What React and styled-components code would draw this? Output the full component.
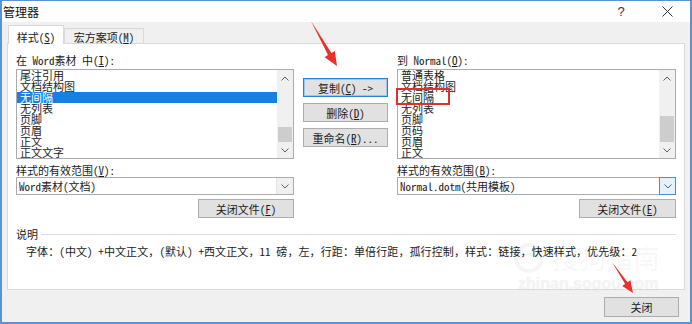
import React from "react";
import styled, { createGlobalStyle } from "styled-components";

const GlobalStyle = createGlobalStyle`
  html, body {
    margin: 0;
    padding: 0;
    background: #ffffff;
  }
  body {
    font-family: "Noto Sans Mono CJK SC", "Noto Sans CJK SC", sans-serif;
    font-size: 11px;
    color: #1a1a1a;
  }
  * {
    box-sizing: border-box;
  }
`;

const leftItems = ["尾注引用", "文档结构图", "无间隔", "无列表", "页脚", "页眉", "正文", "正文文字"];
const rightItems = ["普通表格", "文档结构图", "无间隔", "无列表", "页脚", "页码", "页眉", "正文"];

function Chevron({ up }) {
  return (
    <svg width="8" height="5" viewBox="0 0 8 5">
      <polyline
        points={up ? "0.5,4.5 4,1 7.5,4.5" : "0.5,0.5 4,4 7.5,0.5"}
        fill="none"
        stroke="#606060"
        strokeWidth="1"
      />
    </svg>
  );
}

function ListBox({ items, selected, marked, thumb }) {
  return (
    <List>
      <Items>
        {items.map((item, i) => (
          <Item key={i} $selected={i === selected}>
            {i === marked ? <Marked>{item}</Marked> : item}
          </Item>
        ))}
      </Items>
      <ScrollBar>
        <ScrollArrow>
          <Chevron up />
        </ScrollArrow>
        <Track>
          <Thumb style={{ height: thumb }} />
        </Track>
        <ScrollArrow>
          <Chevron />
        </ScrollArrow>
      </ScrollBar>
    </List>
  );
}

function App() {
  return (
    <>
      <GlobalStyle />
      <Window>
        <TitleBar>
          <TitleText>管理器</TitleText>
          <TitleButtons>
            <TitleButton>?</TitleButton>
            <TitleButton>
              <svg width="11" height="11" viewBox="0 0 11 11">
                <path d="M0.5 0.5 L10.5 10.5 M10.5 0.5 L0.5 10.5" stroke="#333" strokeWidth="1" />
              </svg>
            </TitleButton>
          </TitleButtons>
        </TitleBar>
        <Body>
          <TabRow>
            <Tab $active>
              样式(<u>S</u>)
            </Tab>
            <Tab>
              宏方案项(<u>M</u>)
            </Tab>
          </TabRow>
          <Panel>
            <TopGrid>
              <Column>
                <FieldLabel>
                  在 Word素材 中(<u>I</u>):
                </FieldLabel>
                <ListBox items={leftItems} selected={2} thumb={15} />
                <FieldLabel $gap={4}>
                  样式的有效范围(<u>V</u>):
                </FieldLabel>
                <Combo>
                  <ComboText>Word素材(文档)</ComboText>
                  <ComboArrow>
                    <Chevron />
                  </ComboArrow>
                </Combo>
                <ButtonRow>
                  <Button $width={96}>
                    关闭文件(<u>F</u>)
                  </Button>
                </ButtonRow>
              </Column>
              <Middle>
                <Button $default>
                  复制(<u>C</u>) -&gt;
                </Button>
                <Button>
                  删除(<u>D</u>)
                </Button>
                <Button>
                  重命名(<u>R</u>)...
                </Button>
              </Middle>
              <Column>
                <FieldLabel>
                  到 Normal(<u>O</u>):
                </FieldLabel>
                <ListBox items={rightItems} marked={2} thumb={26} />
                <FieldLabel $gap={4}>
                  样式的有效范围(<u>B</u>):
                </FieldLabel>
                <Combo>
                  <ComboText>Normal.dotm(共用模板)</ComboText>
                  <ComboArrow $hover>
                    <Chevron />
                  </ComboArrow>
                </Combo>
                <ButtonRow>
                  <Button $width={97}>
                    关闭文件(<u>E</u>)
                  </Button>
                </ButtonRow>
              </Column>
            </TopGrid>
            <GroupHeader>说明</GroupHeader>
            <Description>
              字体：(中文) +中文正文，(默认) +西文正文，11 磅，左，行距：单倍行距，孤行控制，样式：链接，快速样式，优先级：2
            </Description>
          </Panel>
          <Footer>
            <Button $width={75} $height={20}>
              关闭
            </Button>
          </Footer>
        </Body>
        <Watermark>
          <WatermarkLogo>
            <svg width="34" height="30" viewBox="0 0 34 30">
              <circle cx="17" cy="15" r="13" fill="none" stroke="currentColor" strokeWidth="4" />
              <path d="M8 15 Q17 7 26 15" fill="none" stroke="currentColor" strokeWidth="3" />
            </svg>
            搜狗指南
          </WatermarkLogo>
          <WatermarkUrl>zhinan.sogou.com</WatermarkUrl>
        </Watermark>
        <Arrows viewBox="0 0 692 324">
          <polygon
            points="311,21 331.4,53.1 334.8,51 337,66 324.6,57.2 328,55.1"
            fill="#e8312b"
          />
          <polygon
            points="612,262 627.5,282.3 630.4,280.3 633,293 622.2,285.9 625.1,283.9"
            fill="#e8312b"
          />
        </Arrows>
      </Window>
    </>
  );
}

const Window = styled.div`
  position: relative;
  width: 692px;
  height: 324px;
  display: flex;
  flex-direction: column;
  background: #f0f0f0;
  border-style: solid;
  border-color: #5b93d0;
  border-width: 1px 2px 2px 2px;
  overflow: hidden;
`;

const TitleBar = styled.div`
  height: 21px;
  display: flex;
  align-items: center;
  justify-content: space-between;
  padding-left: 1px;
  background: #ffffff;
`;

const TitleText = styled.span`
  font-family: "Noto Sans CJK SC", sans-serif;
  font-size: 12px;
  line-height: 21px;
  color: #111;
`;

const TitleButtons = styled.div`
  display: flex;
  height: 100%;
`;

const TitleButton = styled.div`
  width: 46px;
  display: flex;
  align-items: center;
  justify-content: center;
  font-family: "Liberation Sans", sans-serif;
  font-size: 13px;
  color: #333;
`;

const Body = styled.div`
  flex: 1;
  display: flex;
  flex-direction: column;
  padding: 3px 5px 0 5px;
`;

const TabRow = styled.div`
  height: 18px;
  display: flex;
  align-items: flex-end;
  padding-left: 1px;
  position: relative;
  z-index: 1;
`;

const Tab = styled.div`
  display: flex;
  justify-content: center;
  align-items: center;
  white-space: nowrap;
  border: 1px solid #d9d9d9;
  border-bottom: none;
  width: ${(p) => (p.$active ? "56px" : "80px")};
  height: ${(p) => (p.$active ? "19px" : "15px")};
  margin-bottom: ${(p) => (p.$active ? "-1px" : "0")};
  padding-top: ${(p) => (p.$active ? "4px" : "2px")};
  background: ${(p) => (p.$active ? "#ffffff" : "#f0f0f0")};
`;

const Panel = styled.div`
  height: 247px;
  display: flex;
  flex-direction: column;
  padding: 9px 8px 0 8px;
  background: #ffffff;
  border: 1px solid #d9d9d9;
`;

const TopGrid = styled.div`
  display: grid;
  grid-template-columns: 278px 85px 279px;
  column-gap: 9px;
`;

const Column = styled.div`
  display: flex;
  flex-direction: column;
`;

const FieldLabel = styled.div`
  height: 14px;
  line-height: 14px;
  white-space: nowrap;
  margin-top: ${(p) => p.$gap || 0}px;
`;

const List = styled.div`
  margin-top: 2px;
  height: 90px;
  display: flex;
  border: 1px solid #a9abb0;
  background: #ffffff;
`;

const Items = styled.div`
  flex: 1;
`;

const Item = styled.div`
  height: 11px;
  line-height: 11px;
  padding-left: 3px;
  white-space: nowrap;
  color: ${(p) => (p.$selected ? "#ffffff" : "#1a1a1a")};
  background: ${(p) => (p.$selected ? "#1581e6" : "transparent")};
`;

const Marked = styled.span`
  position: relative;
  &::after {
    content: "";
    position: absolute;
    left: -5px;
    top: -1px;
    width: 50px;
    height: 13px;
    border: 2px solid #e0302c;
  }
`;

const ScrollBar = styled.div`
  width: 16px;
  display: flex;
  flex-direction: column;
  background: #f0f0f0;
`;

const ScrollArrow = styled.div`
  height: 16px;
  display: flex;
  align-items: center;
  justify-content: center;
`;

const Track = styled.div`
  flex: 1;
  display: flex;
  flex-direction: column;
  justify-content: flex-end;
  padding: 0 1px;
`;

const Thumb = styled.div`
  background: #cdcdcd;
`;

const Combo = styled.div`
  height: 18px;
  display: flex;
  border: 1px solid #a9abb0;
  background: #ffffff;
`;

const ComboText = styled.div`
  flex: 1;
  padding-left: 2px;
  line-height: 16px;
  white-space: nowrap;
`;

const ComboArrow = styled.div`
  width: 17px;
  display: flex;
  align-items: center;
  justify-content: center;
  margin: ${(p) => (p.$hover ? "-1px -1px -1px 0" : "0")};
  border-left: 1px solid ${(p) => (p.$hover ? "#3c8fdc" : "#e3e3e3")};
  border: ${(p) => (p.$hover ? "1px solid #3c8fdc" : undefined)};
  background: ${(p) => (p.$hover ? "#e5f1fb" : "#f0f0f0")};
`;

const ButtonRow = styled.div`
  display: flex;
  justify-content: flex-end;
  margin-top: 4px;
`;

const Middle = styled.div`
  display: flex;
  flex-direction: column;
  gap: 6px;
  padding-top: 25px;
`;

const Button = styled.div`
  width: ${(p) => (p.$width ? `${p.$width}px` : "auto")};
  height: ${(p) => p.$height || 19}px;
  display: flex;
  align-items: center;
  justify-content: center;
  white-space: nowrap;
  background: #e1e1e1;
  border: 1px solid ${(p) => (p.$default ? "#2a7fd4" : "#adadad")};
  box-shadow: ${(p) => (p.$default ? "inset 0 0 0 1px #9cc6ef" : "none")};
`;

const GroupHeader = styled.div`
  margin-top: 9px;
  height: 14px;
  line-height: 14px;
  display: flex;
  align-items: center;
  gap: 3px;
  &::after {
    content: "";
    flex: 1;
    height: 1px;
    background: #dcdcdc;
  }
`;

const Description = styled.div`
  margin-top: 3px;
  padding-left: 10px;
  line-height: 14px;
  letter-spacing: 0.1px;
  white-space: nowrap;
`;

const Footer = styled.div`
  flex: 1;
  display: flex;
  justify-content: flex-end;
  align-items: flex-start;
  padding: 7px 6px 0 0;
`;

const Watermark = styled.div`
  position: absolute;
  left: 510px;
  top: 240px;
  pointer-events: none;
  display: flex;
  flex-direction: column;
  align-items: flex-start;
`;

const WatermarkLogo = styled.div`
  display: flex;
  align-items: center;
  gap: 6px;
  font-family: "Noto Sans CJK SC", sans-serif;
  font-size: 27px;
  line-height: 34px;
  color: rgba(0, 0, 0, 0.04);
`;

const WatermarkUrl = styled.div`
  margin-left: 6px;
  font-family: "Liberation Sans", sans-serif;
  font-weight: bold;
  font-size: 16px;
  line-height: 18px;
  color: rgba(255, 255, 255, 0.55);
  text-shadow: 0 0 1px rgba(0, 0, 0, 0.1);
`;

const Arrows = styled.svg`
  position: absolute;
  left: -2px;
  top: -1px;
  width: 692px;
  height: 324px;
  pointer-events: none;
`;

export default App;
